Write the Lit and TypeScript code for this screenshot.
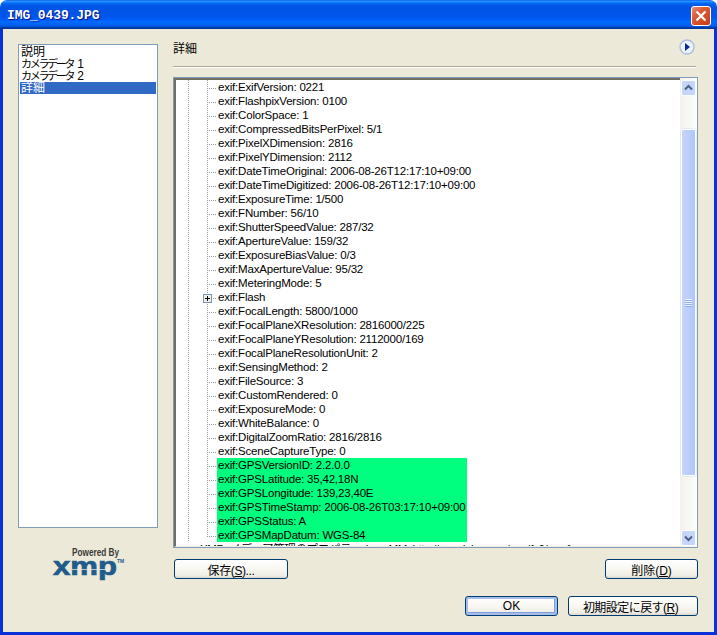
import { LitElement, html, css } from "lit";
import { customElement } from "lit/decorators.js";

const ROWS = [
  "exif:ExifVersion: 0221","exif:FlashpixVersion: 0100","exif:ColorSpace: 1","exif:CompressedBitsPerPixel: 5/1",
  "exif:PixelXDimension: 2816","exif:PixelYDimension: 2112","exif:DateTimeOriginal: 2006-08-26T12:17:10+09:00",
  "exif:DateTimeDigitized: 2006-08-26T12:17:10+09:00","exif:ExposureTime: 1/500","exif:FNumber: 56/10",
  "exif:ShutterSpeedValue: 287/32","exif:ApertureValue: 159/32","exif:ExposureBiasValue: 0/3","exif:MaxApertureValue: 95/32",
  "exif:MeteringMode: 5","exif:Flash","exif:FocalLength: 5800/1000","exif:FocalPlaneXResolution: 2816000/225",
  "exif:FocalPlaneYResolution: 2112000/169","exif:FocalPlaneResolutionUnit: 2","exif:SensingMethod: 2","exif:FileSource: 3",
  "exif:CustomRendered: 0","exif:ExposureMode: 0","exif:WhiteBalance: 0","exif:DigitalZoomRatio: 2816/2816","exif:SceneCaptureType: 0",
];
const GPS = [
  "exif:GPSVersionID: 2.2.0.0","exif:GPSLatitude: 35,42,18N","exif:GPSLongitude: 139,23,40E",
  "exif:GPSTimeStamp: 2006-08-26T03:17:10+09:00","exif:GPSStatus: A","exif:GPSMapDatum: WGS-84",
];

@customElement("app-root")
export class AppRoot extends LitElement {
  static styles = css`
    :host { display: block; width: 717px; height: 635px; background: #fff; overflow: hidden;
      font-family: "Liberation Sans", "Noto Sans CJK JP", sans-serif; font-size: 12px; color: #000; }
    .window { width: 717px; height: 635px; display: flex; flex-direction: column; box-sizing: border-box; }
    .title { height: 29px; flex: none; display: flex; align-items: center; justify-content: space-between;
      padding: 2px 6px 0 7px; box-sizing: border-box; border-radius: 7px 7px 0 0;
      background: linear-gradient(180deg,#0058EE 0%,#3593FF 4%,#288EFF 6%,#127DFF 8%,#036FFC 10%,#0262EE 14%,#0057E5 20%,#0054E3 24%,#0055EB 56%,#005BF5 66%,#026AFE 76%,#0062EF 86%,#0052D6 92%,#0040AB 94%,#003092 100%); }
    .title-text { font-family: "Liberation Mono", monospace; font-weight: 700; font-size: 13px; letter-spacing: -0.1px;
      color: #fff; text-shadow: 1px 1px 1px #0f1089; }
    .close { width: 20px; height: 20px; display: block; }
    .client { flex: 1; min-height: 0; display: flex; flex-direction: column; background: #ECE9D8;
      border-style: solid; border-color: #0831D9; border-width: 0 3px 3px 3px;
      padding: 15px 16px 16px 15px; box-sizing: border-box; }
    .main { display: flex; gap: 15px; flex: none; }
    .side { width: 140px; flex: none; display: flex; flex-direction: column; }
    .list { height: 484px; box-sizing: border-box; border: 1px solid #7F9DB9; background: #fff; padding: 1px; }
    .item { height: 12px; line-height: 12px; font-size: 12px; padding-left: 1px; white-space: nowrap; }
    .kana { letter-spacing: -2.3px; font-size: 11px; margin-right: 4px; }
    .item.sel { background: #316AC5; color: #fff; }
    .logo { display: block; margin: 18px 0 0 34px; }
    .content { width: 525px; flex: none; display: flex; flex-direction: column; }
    .head { height: 23px; display: flex; justify-content: space-between; align-items: flex-start;
      box-sizing: border-box; padding-right: 1px; border-bottom: 1px solid #ACA899; box-shadow: 0 1px 0 #fff; margin-right: 2px; }
    .head-title { font-size: 12px; line-height: 12px; margin-top: -1px; height: 12px; }
    .head svg { margin-top: -5px; }
    .tree { margin-top: 10px; height: 471px; box-sizing: border-box; border: 1px solid #7F9DB9; background: #fff;
      display: flex; overflow: hidden; }
    .tree-view { flex: 1; min-width: 0; overflow: hidden; border-top: 2px solid #716F64; border-left: 2px solid #716F64;
      border-bottom: 1px solid #F1EFE2; }
    .row { height: 14px; display: flex; line-height: 14px; white-space: nowrap; font-size: 11.5px; letter-spacing: -0.2px; }
    .g0 { width: 12px; flex: none; }
    .dots-v { background: repeating-linear-gradient(to bottom,#9a9a9a 0 1px,transparent 1px 2px) 0 0/1px 100% no-repeat; }
    .g1 { width: 19px; flex: none; }
    .g2 { width: 10px; flex: none; position: relative;
      background:
        repeating-linear-gradient(to bottom,#9a9a9a 0 1px,transparent 1px 2px) 0 0/1px 100% no-repeat,
        repeating-linear-gradient(to right,#9a9a9a 0 1px,transparent 1px 2px) 0 8px/100% 1px no-repeat; }
    .g2.last { background:
        repeating-linear-gradient(to bottom,#9a9a9a 0 1px,transparent 1px 2px) 0 0/1px 9px no-repeat,
        repeating-linear-gradient(to right,#9a9a9a 0 1px,transparent 1px 2px) 0 8px/100% 1px no-repeat; }
    .plus { position: absolute; left: -4px; top: 4px; width: 9px; height: 9px; display: block; }
    .txt { padding-left: 1px; }
    .txt.gps { background: #00FF7F; width: 250px; box-sizing: border-box; }
    .xmp-row { padding-left: 24px; letter-spacing: -0.37px; }
    .sb { width: 17px; flex: none; display: flex; flex-direction: column; align-items: center; padding: 2px 0 1px;
      box-sizing: border-box; background: linear-gradient(90deg,#F3F1EC,#FEFEFB); }
    .sb-btn { width: 15px; height: 16px; flex: none; display: block; }
    .sb-gap1 { height: 33px; flex: none; }
    .thumb { width: 15px; height: 347px; flex: none; box-sizing: border-box; border: 1px solid #fff; border-radius: 2px;
      background: linear-gradient(90deg,#C4D4FC,#BCCEFA 50%,#B1C5F7); display: flex; align-items: center; justify-content: center; box-shadow: 0 0 0 0.5px #D6DEF5; }
    .grip { width: 7px; height: 8px; background: repeating-linear-gradient(to bottom,#EEF4FE 0 1px,#8CB0F8 1px 2px); }
    .sb-fill { flex: 1; }
    .btns { display: flex; justify-content: space-between; margin-top: 11px; }
    .btn { height: 20px; box-sizing: border-box; border: 1px solid #003C74; border-radius: 3px; display: flex; align-items: center; justify-content: center;
      background: linear-gradient(180deg,#FFFFFF 0%,#F8F7F2 50%,#F0EEE6 85%,#DCD8CC 100%); font-size: 12px; white-space: nowrap; }
    .tight { letter-spacing: -0.4px; }
    .b-save { width: 114px; margin-left: 1px; }
    .b-del { width: 93px; }
    .foot { display: flex; justify-content: flex-end; gap: 10px; margin-top: 6px; }
    .b-ok { width: 93px; box-shadow: inset 0 0 0 2px #A6BFE9, inset -1px -1px 0 2px #7FA0DC; }
    .b-reset { width: 130px; letter-spacing: -0.55px; padding-right: 5px; }
  `;

  private guide(last: boolean, plus = false) {
    return html`<span class="g0"></span><span class="g1 dots-v"></span><span class="g2 ${last ? "last" : ""}">${plus
      ? html`<svg class="plus" viewBox="0 0 9 9"><rect x=".5" y=".5" width="8" height="8" fill="#f0f0ea" stroke="#7A92B5"/><path d="M2 4.5h5M4.5 2v5" stroke="#000" shape-rendering="crispEdges"/></svg>`
      : ""}</span>`;
  }

  render() {
    return html`<div class="window">
      <div class="title">
        <span class="title-text">IMG_0439.JPG</span>
        <svg class="close" viewBox="0 0 20 20">
          <defs><linearGradient id="cg" x1="0" y1="0" x2="1" y2="1"><stop offset="0" stop-color="#E8917A"/><stop offset=".35" stop-color="#DF5B37"/><stop offset="1" stop-color="#C63A12"/></linearGradient></defs>
          <rect x=".5" y=".5" width="19" height="19" rx="2.5" fill="url(#cg)" stroke="#fff"/>
          <path d="M5.5 5.5l9 9M14.5 5.5l-9 9" stroke="#fff" stroke-width="2.2"/>
        </svg>
      </div>
      <div class="client">
        <div class="main">
          <div class="side">
            <div class="list">
              <div class="item">説明</div>
              <div class="item"><span class="kana">カメラデータ</span>1</div>
              <div class="item"><span class="kana">カメラデータ</span>2</div>
              <div class="item sel">詳細</div>
            </div>
            <svg class="logo" width="74" height="44" viewBox="0 0 74 44">
              <text x="20" y="10" font-family="Liberation Sans" font-weight="700" font-size="11" fill="#3A3A3A" textLength="47" lengthAdjust="spacingAndGlyphs">Powered By</text>
              <text x="1" y="29" font-family="Liberation Sans" font-weight="700" font-size="26" fill="#1F5C8C" stroke="#1F5C8C" stroke-width=".7" textLength="64" lengthAdjust="spacingAndGlyphs">xmp</text>
              <rect x="20" y="23" width="37" height="1" fill="#ECE9D8" opacity=".75"/>
              <text x="65" y="17" font-family="Liberation Sans" font-weight="700" font-size="5" fill="#1F5C8C">TM</text>
            </svg>
          </div>
          <div class="content">
            <div class="head">
              <span class="head-title">詳細</span>
              <svg width="16" height="16" viewBox="0 0 16 16"><circle cx="8" cy="8" r="7" fill="#EEF2FA" stroke="#A9BDE6" stroke-width="1.4"/><path d="M6 4l5 4-5 4z" fill="#0A2C9A"/></svg>
            </div>
            <div class="tree">
              <div class="tree-view">
                ${ROWS.map((r) => html`<div class="row">${this.guide(false, r === "exif:Flash")}<span class="txt">${r}</span></div>`)}
                ${GPS.map((r, i) => html`<div class="row">${this.guide(i === GPS.length - 1)}<span class="txt gps">${r}</span></div>`)}
                <div class="row xmp-row">XMP: メディア管理のプロパティ (xmpMM: http://ns.adobe.com/xap/1.0/mm/)</div>
              </div>
              <div class="sb">
                <svg class="sb-btn" viewBox="0 0 15 16"><rect x=".5" y=".5" width="14" height="15" rx="2" fill="#C5D5FB" stroke="#fff"/><path d="M4 9.5l3.5-3.5 3.5 3.5" fill="none" stroke="#4D6185" stroke-width="2"/></svg>
                <div class="sb-gap1"></div>
                <div class="thumb"><div class="grip"></div></div>
                <div class="sb-fill"></div>
                <svg class="sb-btn" viewBox="0 0 15 16"><rect x=".5" y=".5" width="14" height="15" rx="2" fill="#C5D5FB" stroke="#fff"/><path d="M4 6.5l3.5 3.5 3.5-3.5" fill="none" stroke="#4D6185" stroke-width="2"/></svg>
              </div>
            </div>
            <div class="btns">
              <div class="btn b-save tight"><span>保存(<u>S</u>)...</span></div>
              <div class="btn b-del"><span>削除(<u>D</u>)</span></div>
            </div>
          </div>
        </div>
        <div class="foot">
          <div class="btn b-ok">OK</div>
          <div class="btn b-reset"><span>初期設定に戻す(<u>R</u>)</span></div>
        </div>
      </div>
    </div>`;
  }
}
